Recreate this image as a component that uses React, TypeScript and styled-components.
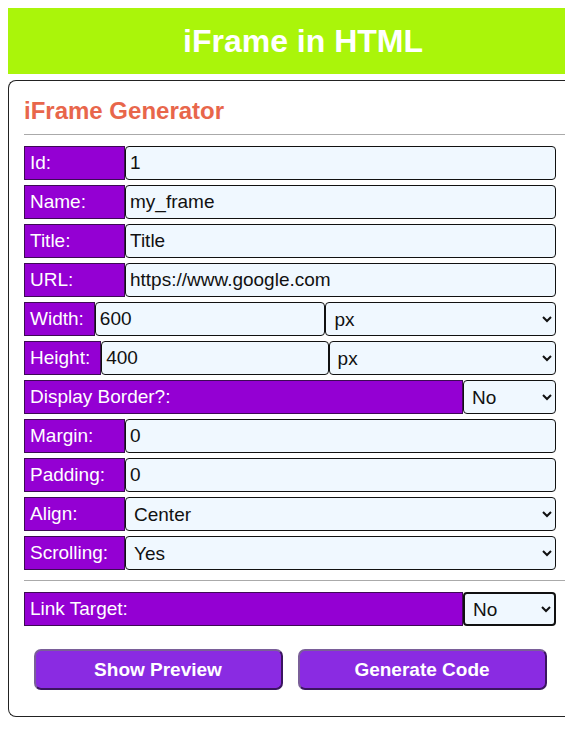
import styled, { createGlobalStyle } from 'styled-components';

const GlobalStyle = createGlobalStyle`
	html {
		overflow: hidden;
	}
	body {
		margin: 8px;
		background: #ffffff;
		font-family: "Liberation Sans", Arial, sans-serif;
	}
	* {
		box-sizing: border-box;
	}
`;

const Header = styled.h1`
	width: 558px;
	height: 66px;
	margin: 0 0 6px;
	padding-left: 32px;
	display: flex;
	align-items: center;
	justify-content: center;
	background: #aaf50a;
	color: #ffffff;
	font-size: 32px;
	font-weight: bold;
`;

/* the card runs past the right edge of the window, so its right side is cut off */
const Card = styled.section`
	width: 565px;
	border: 1px solid #222;
	border-right: none;
	border-radius: 8px 0 0 8px;
	padding: 16px 0 26px 15px;
`;

const Title = styled.h2`
	margin: 0 0 9px;
	color: #e8664b;
	font-size: 24px;
	font-weight: bold;
`;

const Rule = styled.hr`
	margin: 0 0 11px;
	border: none;
	border-top: 1px solid #aaa;
	height: 1px;
`;

const Fields = styled.div`
	display: flex;
	flex-direction: column;
	gap: 5px;
	margin-right: 17px;
	margin-bottom: 10px;
`;

const Row = styled.div`
	display: flex;
	height: 34px;
`;

const Label = styled.label<{ $width?: number; $grow?: boolean }>`
	flex: ${p => (p.$grow ? '1' : '0 0 auto')};
	width: ${p => (p.$width ? `${p.$width}px` : 'auto')};
	display: flex;
	align-items: center;
	padding: 0 10px 0 5px;
	background: #9400d3;
	border: 1px solid #3d0a55;
	color: #ffffff;
	font-size: 19px;
	white-space: nowrap;
`;

const TextInput = styled.input`
	flex: 1;
	min-width: 0;
	height: 100%;
	padding: 0 4px;
	background: #f0f8ff;
	border: 1px solid #111;
	border-radius: 4px;
	font-family: "Liberation Sans", Arial, sans-serif;
	font-size: 19px;
	color: #111;
	outline: none;
`;

const Select = styled.select<{ $width?: number; $focused?: boolean }>`
	flex: ${p => (p.$width ? `0 0 ${p.$width}px` : '1')};
	min-width: 0;
	height: 100%;
	padding: 0 4px;
	background: #f0f8ff;
	border: ${p => (p.$focused ? '2px' : '1px')} solid #111;
	border-radius: 4px;
	font-family: "Liberation Sans", Arial, sans-serif;
	font-size: 19px;
	color: #111;
	outline: none;
`;

const Actions = styled.div`
	display: flex;
	justify-content: center;
	gap: 15px;
	margin: 23px 17px 0 0;
`;

const Button = styled.button`
	width: 249px;
	height: 41px;
	background: #8a2be2;
	color: #ffffff;
	font-family: "Liberation Sans", Arial, sans-serif;
	font-size: 19px;
	font-weight: bold;
	border: 2px solid;
	border-color: #7a5f99 #3b1560 #3b1560 #7a5f99;
	border-radius: 7px;
	cursor: pointer;
`;

const textRows = [
	{ label: 'Id:', value: '1' },
	{ label: 'Name:', value: 'my_frame' },
	{ label: 'Title:', value: 'Title' },
	{ label: 'URL:', value: 'https://www.google.com' },
];

const App = () => {
	return (
		<>
			<GlobalStyle />
			<Header>iFrame in HTML</Header>
			<Card>
				<Title>iFrame Generator</Title>
				<Rule />
				<Fields>
					{textRows.map(r => (
						<Row key={r.label}>
							<Label $width={101}>{r.label}</Label>
							<TextInput defaultValue={r.value} />
						</Row>
					))}
					<Row>
						<Label>Width:</Label>
						<TextInput defaultValue="600" />
						<Select defaultValue="px">
							<option value="px">px</option>
							<option value="%">%</option>
						</Select>
					</Row>
					<Row>
						<Label>Height:</Label>
						<TextInput defaultValue="400" />
						<Select defaultValue="px">
							<option value="px">px</option>
							<option value="%">%</option>
						</Select>
					</Row>
					<Row>
						<Label $grow>Display Border?:</Label>
						<Select $width={93} defaultValue="No">
							<option>No</option>
							<option>Yes</option>
						</Select>
					</Row>
					<Row>
						<Label $width={101}>Margin:</Label>
						<TextInput defaultValue="0" />
					</Row>
					<Row>
						<Label $width={101}>Padding:</Label>
						<TextInput defaultValue="0" />
					</Row>
					<Row>
						<Label $width={101}>Align:</Label>
						<Select defaultValue="Center">
							<option>Left</option>
							<option>Center</option>
							<option>Right</option>
						</Select>
					</Row>
					<Row>
						<Label $width={101}>Scrolling:</Label>
						<Select defaultValue="Yes">
							<option>Yes</option>
							<option>No</option>
							<option>Auto</option>
						</Select>
					</Row>
				</Fields>
				<Rule />
				<Fields>
					<Row>
						<Label $grow>Link Target:</Label>
						<Select $width={93} $focused defaultValue="No">
							<option>No</option>
							<option>Yes</option>
						</Select>
					</Row>
				</Fields>
				<Actions>
					<Button>Show Preview</Button>
					<Button>Generate Code</Button>
				</Actions>
			</Card>
		</>
	);
};

export default App;
